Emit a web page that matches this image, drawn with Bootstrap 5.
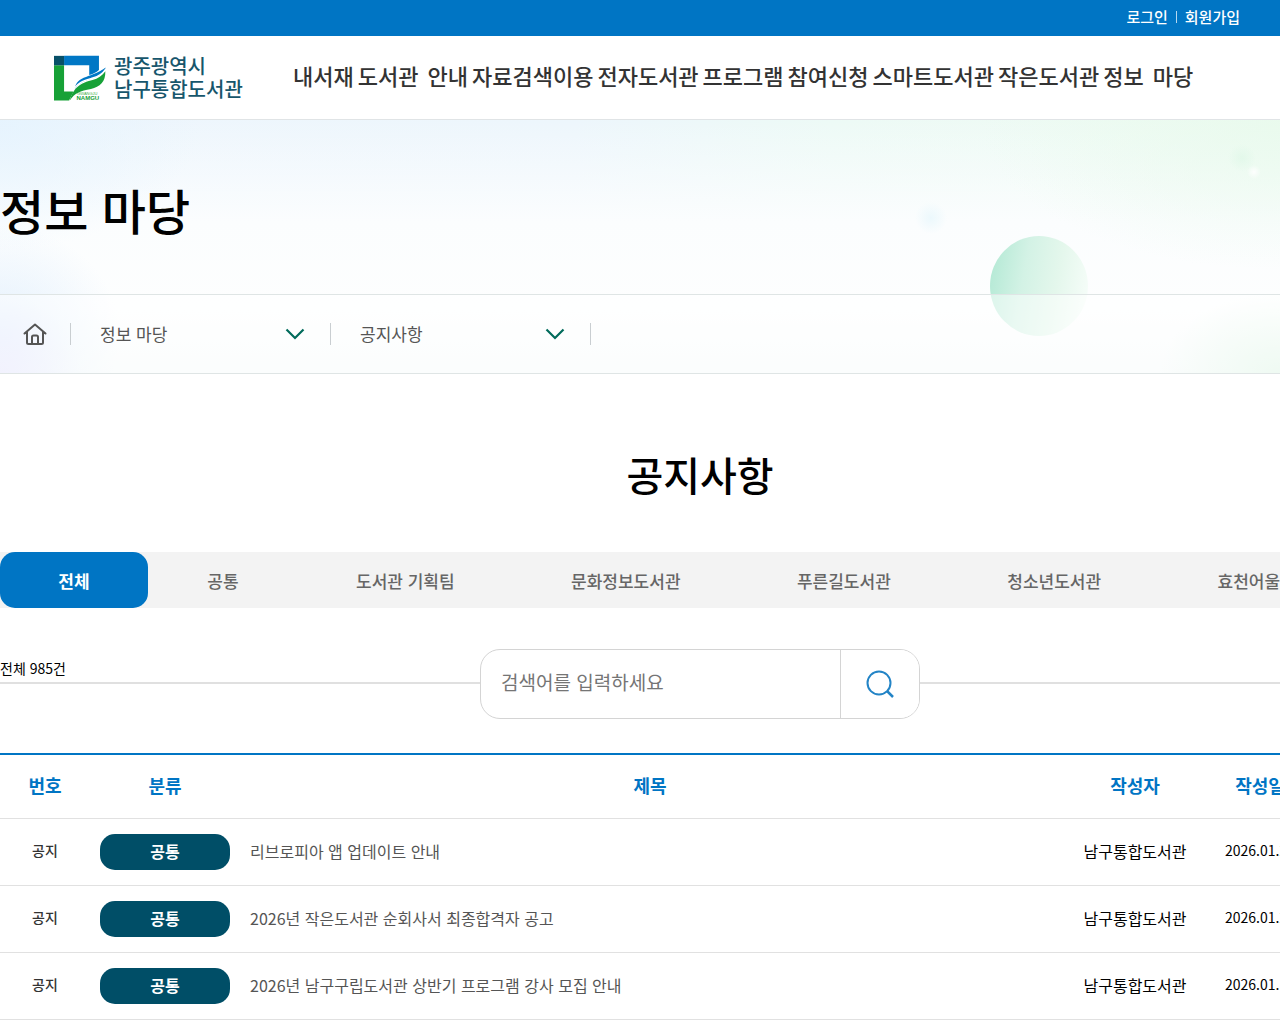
<!DOCTYPE html>
<html lang="ko">
<head>
<meta charset="utf-8">
<meta name="viewport" content="width=device-width, initial-scale=1">
<title>공지사항 - 광주광역시 남구통합도서관</title>
<link href="https://cdn.jsdelivr.net/npm/bootstrap@5.3.0/dist/css/bootstrap.min.css" rel="stylesheet">
<style>
:root { --lib-blue: #0075c4; --lib-navy: #004e67; --lib-line: #e1e1e1; }
body { font-family: "Noto Sans CJK KR", "Noto Sans", sans-serif; color: #000; background: #fff; overflow-x: hidden; }
a { text-decoration: none; color: inherit; }
.util-bar { background: var(--lib-blue); height: 36px; padding: 0 40px 2px 0; gap: 8px; font-size: 15px; line-height: 34px; font-weight: 500; color: #fff; }
.util-bar i { width: 1px; height: 12px; background: #b5d8f0; }
.site-head { height: 84px; padding-left: 54px; border-bottom: 1px solid #e0e4e6; }
.brand-name { font-size: 20px; line-height: 23px; font-weight: 500; color: #17566c; padding-bottom: 1px; }
.brand-box { width: 239px; gap: 8px; }
.main-menu { gap: 4px; padding-bottom: 5px; font-size: 22px; line-height: 32px; font-weight: 500; color: #333; }
.main-menu .two-part { display: flex; gap: 9px; }
.hero {
  background:
    radial-gradient(circle 7px at 1254px 52px, rgba(255,255,255,.9), transparent),
    radial-gradient(circle 14px at 1242px 38px, rgba(220,247,230,.6), transparent),
    radial-gradient(circle 16px at 931px 98px, rgba(232,247,252,.8), transparent),
    radial-gradient(circle 80px at 0 254px, rgba(226,222,252,.7), transparent),
    radial-gradient(ellipse 120px 110px at 0 215px, rgba(216,234,252,.7), transparent),
    radial-gradient(ellipse 120px 80px at 100% 100%, rgba(216,243,224,.8), transparent),
    radial-gradient(ellipse 300px 150px at 100% 0, rgba(232,250,236,.8), transparent),
    radial-gradient(ellipse 200px 130px at 0 0, rgba(228,243,254,.8), transparent),
    linear-gradient(180deg, rgba(255,255,255,0) 0, #fbfdfe 40%, #fdfefe 75%, #f6fafa 100%),
    linear-gradient(90deg, #eef6fd 0, #edf6fc 45%, #edfaf6 65%, #effbf3 100%);
  border-bottom: 1px solid #dfe5e5;
}
.hero-orb { position: absolute; left: 990px; top: 116px; width: 98px; height: 100px; border-radius: 50%; background: linear-gradient(100deg, #b0e8d3 0, #d3f2e5 35%, #e4f7ec 65%, #f9fefb 100%); }
.hero-title { height: 174px; padding-top: 53px; font-size: 48px; line-height: 72px; font-weight: 500; }
.crumbs { height: 79px; border-top: 1px solid #dfe5e5; background: rgba(255,255,255,.5); }
.crumb-home { width: 70px; }
.crumb-rule { width: 1px; height: 22px; background: #c9ced1; }
.crumb-pick {
  width: 259px; height: 46px; padding: 0 50px 0 29px; border: 0; border-radius: 0; font-size: 17px; color: #555; background-color: transparent;
  background-image: url("data:image/svg+xml,%3Csvg xmlns='http://www.w3.org/2000/svg' viewBox='0 0 20 12'%3E%3Cpath d='M1.5 1.5 10 10l8.500-8.500' fill='none' stroke='%23006b5b' stroke-width='2.200'/%3E%3C/svg%3E");
  background-size: 20px 12px; background-position: right 25px center;
}
.board { width: 1400px; }
.board-title { padding-top: 70px; font-size: 40px; line-height: 60px; font-weight: 500; margin-bottom: 48px; }
.lib-tabs { gap: 1px; background: #f3f3f3; height: 56px; }
.lib-tabs a { min-width: 148px; padding: 0 58px; font-size: 17px; line-height: 57px; font-weight: 500; color: #666; white-space: nowrap; text-align: center; }
.lib-tabs a.active { background: var(--lib-blue); color: #fff; border-radius: 15px; font-weight: 700; }
.search-zone { margin-top: 41px; height: 70px; }
.search-zone hr { position: absolute; left: 0; right: 0; top: 33px; margin: 0; border-top: 2px solid #e0e0e0; opacity: 1; }
.total { position: absolute; left: 0; top: 9px; font-size: 14px; line-height: 20px; }
.search-box { position: relative; width: 440px; height: 70px; border: 1px solid #d4d4d4; border-radius: 20px; background: #fff; overflow: hidden; }
.search-box input { border: 0; font-size: 19px; padding: 0 20px 3px; background: transparent; border-radius: 0; }
.search-box input::placeholder { color: #757575; }
.search-box button { width: 79px; border: 0; border-left: 1px solid #d4d4d4; background: #fff; flex: none; }
.notice { margin-top: 34px; table-layout: fixed; border-top: 2px solid var(--lib-blue); width: 100%; }
.notice th { height: 64px; color: var(--lib-blue); font-size: 18px; font-weight: 700; text-align: center; padding: 0 0 1px; border-bottom: 1px solid var(--lib-line); }
.notice td { height: 67px; padding: 0 10px 2px; font-size: 16px; text-align: center; border-bottom: 1px solid var(--lib-line); white-space: nowrap; }
.notice td.tag-cell { padding: 0 10px; }
.notice td.subject { text-align: left; color: #555; }
.notice td.kind { font-size: 14px; font-weight: 500; color: #333; }
.notice td.small-num { font-size: 14px; }
.tag-lib { display: block; height: 36px; line-height: 34px; border-radius: 15px; background: var(--lib-navy); color: #fff; font-weight: 700; }
</style>
<script src="https://cdn.jsdelivr.net/npm/bootstrap@5.3.0/dist/js/bootstrap.bundle.min.js"></script>
</head>
<body>
<div class="util-bar d-flex justify-content-end align-items-center">
  <a href="#">로그인</a><i></i><a href="#">회원가입</a>
</div>
<header class="site-head d-flex align-items-center">
  <a href="#" class="brand-box d-flex align-items-center flex-shrink-0">
    <svg width="52" height="46" viewBox="75 58 155 136" role="img" aria-label="광주 남구">
      <path fill="#17a137" d="M75 88h30v78h28l-13 27H75z"/>
      <path fill="#0077c5" d="M105 60h104v42c-8 7-18 12-29 15V88h-75z"/>
      <path fill="#075068" d="M75 60h30v28H75z"/>
      <path fill="#0077c5" d="M136 162c4-34 30-36 55-47 16-6 29-13 38-20-5 16-18 26-35 31-25 7-45 12-58 36z"/>
      <path fill="#17a137" d="M122 193c12-44 38-53 68-61 16-4 29-13 38-26 1 31-16 47-43 53-32 6-48 12-63 34z"/>
      <path fill="none" stroke="#fff" stroke-width="4" d="M131 165c14-27 34-31 60-39 17-5 29-13 37-25"/>
      <text x="144" y="176" font-family="Liberation Sans" font-size="12" fill="#48b04f">GWANGJU</text>
      <text x="142" y="192" font-family="Liberation Sans" font-weight="700" font-size="18" fill="#17a137">NAMGU</text>
    </svg>
    <span class="brand-name text-nowrap">광주광역시<br>남구통합도서관</span>
  </a>
  <nav class="main-menu d-flex text-nowrap">
    <a href="#" >내서재</a><a href="#" class="two-part"><span>도서관</span> <span>안내</span></a><a href="#">자료검색이용</a><a href="#">전자도서관</a><a href="#">프로그램</a><a href="#">참여신청</a><a href="#">스마트도서관</a><a href="#">작은도서관</a><a href="#" class="two-part"><span>정보</span> <span>마당</span></a>
  </nav>
</header>
<section class="hero position-relative overflow-hidden">
  <div class="hero-orb"></div>
  <h2 class="hero-title position-relative m-0">정보 마당</h2>
  <div class="crumbs position-relative d-flex align-items-center">
    <a href="#" class="crumb-home d-flex justify-content-center" aria-label="홈">
      <svg width="24" height="22" viewBox="0 0 24 22" fill="none" stroke="#555" stroke-width="2" stroke-linejoin="round" stroke-linecap="round"><path d="M1.500 10.500 12 1.500l10.500 9M4 9v10.500q0 1.500 1.500 1.500h13q1.500 0 1.500-1.500V9M9 20.500V14q0-1.500 1.500-1.500h3q1.500 0 1.500 1.500v6.500"/></svg>
    </a>
    <span class="crumb-rule"></span>
    <select class="form-select crumb-pick" aria-label="대메뉴"><option>정보 마당</option></select>
    <span class="crumb-rule"></span>
    <select class="form-select crumb-pick" aria-label="소메뉴"><option>공지사항</option></select>
    <span class="crumb-rule"></span>
  </div>
</section>
<div class="overflow-hidden">
<main class="board">
  <h1 class="board-title text-center">공지사항</h1>
  <nav class="lib-tabs d-flex overflow-hidden">
    <a href="#" class="active">전체</a><a href="#">공통</a><a href="#">도서관 기획팀</a><a href="#">문화정보도서관</a><a href="#">푸른길도서관</a><a href="#">청소년도서관</a><a href="#">효천어울림도서관</a>
  </nav>
  <div class="search-zone position-relative d-flex justify-content-center">
    <hr>
    <span class="total">전체 985건</span>
    <form class="search-box d-flex">
      <input type="text" class="form-control shadow-none" placeholder="검색어를 입력하세요" aria-label="검색어">
      <button type="button" aria-label="검색">
        <svg width="30" height="30" viewBox="0 0 30 30" fill="none" stroke="#2384c6" stroke-width="2"><circle cx="14" cy="14" r="11.500"/><path d="m22 22 6 6" stroke-width="2.500"/></svg>
      </button>
    </form>
  </div>
  <table class="notice">
    <colgroup><col style="width:90px"><col style="width:150px"><col><col style="width:150px"><col style="width:100px"><col style="width:90px"></colgroup>
    <thead><tr><th>번호</th><th>분류</th><th>제목</th><th>작성자</th><th>작성일</th><th>조회수</th></tr></thead>
    <tbody>
      <tr><td class="kind">공지</td><td class="tag-cell"><span class="tag-lib">공통</span></td><td class="subject"><a href="#">리브로피아 앱 업데이트 안내</a></td><td>남구통합도서관</td><td class="small-num">2026.01.28</td><td class="small-num">120</td></tr>
      <tr><td class="kind">공지</td><td class="tag-cell"><span class="tag-lib">공통</span></td><td class="subject"><a href="#">2026년 작은도서관 순회사서 최종합격자 공고</a></td><td>남구통합도서관</td><td class="small-num">2026.01.23</td><td class="small-num">340</td></tr>
      <tr><td class="kind">공지</td><td class="tag-cell"><span class="tag-lib">공통</span></td><td class="subject"><a href="#">2026년 남구구립도서관 상반기 프로그램 강사 모집 안내</a></td><td>남구통합도서관</td><td class="small-num">2026.01.14</td><td class="small-num">510</td></tr>
    </tbody>
  </table>
</main>
</div>
</body>
</html>
